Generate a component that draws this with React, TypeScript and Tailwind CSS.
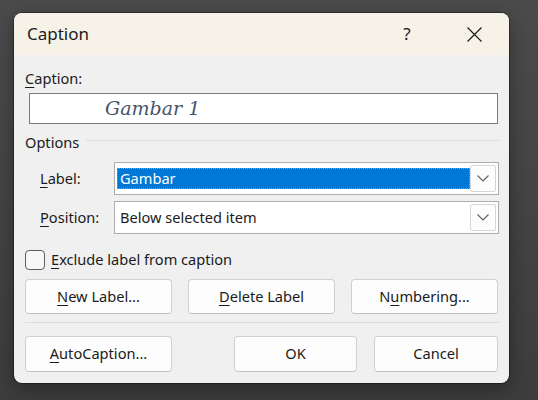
import React from 'react'

const font = { fontFamily: '"Noto Sans", "Open Sans", sans-serif' }

function Btn({ children, w }: { children: React.ReactNode; w: string }) {
  return (
    <button
      className={`${w} h-full bg-[#fdfdfd] border border-[#d0d0d0] border-b-[#c2c2c2] rounded-[4px] text-[14.6px] text-[#1b1b1b] flex items-center justify-center`}
    >
      {children}
    </button>
  )
}

function U({ children }: { children: React.ReactNode }) {
  return <span className="underline underline-offset-[3px] decoration-1">{children}</span>
}

function Chevron() {
  return (
    <svg width="12" height="7" viewBox="0 0 12 7" fill="none">
      <path d="M0.5 0.5 L6 6 L11.5 0.5" stroke="#616161" strokeWidth="1.1" />
    </svg>
  )
}

function Select({ value, selected }: { value: string; selected?: boolean }) {
  return (
    <div className="w-[385px] shrink-0 h-[33px] bg-white border border-[#adadad] flex items-center p-[2px]">
      <div className="flex-1 h-full flex items-center">
        {selected ? (
          <div className="w-full h-[21px] bg-[#0078d7] border border-dotted border-[#ff8c00] flex items-center pl-[2px] text-white">
            {value}
          </div>
        ) : (
          <div className="pl-[3px] text-[#1b1b1b]">{value}</div>
        )}
      </div>
      <div className="w-[26px] h-full bg-[#fdfdfd] border border-[#d6d6d6] rounded-[2px] flex items-center justify-center">
        <Chevron />
      </div>
    </div>
  )
}

export default function App() {
  return (
    <div className="w-[538px] h-[400px] bg-gradient-to-b from-[#4b4b4b] to-[#3d3d3d] pt-[13px] pl-[14px]" style={font}>
      <div className="w-[495px] h-[370px] bg-[#f0f0f0] rounded-lg overflow-hidden shadow-[0_0_0_1px_rgba(0,0,0,0.35),0_6px_20px_rgba(0,0,0,0.35)]">
        {/* title bar */}
        <div className="h-[42px] bg-[#f7f2e8] flex items-center pl-[13px] text-[#1b1b1b]">
          <div className="text-[17px] flex-1">Caption</div>
          <div className="w-[30px] text-[17px] text-center mr-[45px]">?</div>
          <svg width="15" height="15" viewBox="0 0 15 15" className="mr-[27px]">
            <path d="M0.5 0.5 L14.5 14.5 M14.5 0.5 L0.5 14.5" stroke="#1b1b1b" strokeWidth="1.2" />
          </svg>
        </div>

        {/* body */}
        <div className="pl-[11px] pr-[10px] text-[14.6px] text-[#1b1b1b]">
          <div className="mt-[13px] h-[20px] leading-[20px]">
            <U>C</U>aption:
          </div>
          <div className="mt-[5px] ml-[4px] w-[469px] h-[31px] bg-white border border-[#7a7a7a] flex items-center pl-[75px]">
            <span className="italic text-[19px] text-[#44546a]" style={{ fontFamily: '"DejaVu Serif", serif' }}>
              Gambar 1
            </span>
          </div>

          <div className="mt-[8px] h-[20px] flex items-center">
            <span className="leading-[20px]">Options</span>
            <div className="flex-1 h-px bg-[#dcdcdc] ml-[7px] -mt-[3px]" />
          </div>

          <div className="mt-[10px] flex items-center">
            <div className="w-[89px] pl-[15px]">
              <U>L</U>abel:
            </div>
            <Select value="Gambar" selected />
          </div>
          <div className="mt-[6px] flex items-center">
            <div className="w-[89px] pl-[15px]">
              <U>P</U>osition:
            </div>
            <Select value="Below selected item" />
          </div>

          <div className="mt-[16px] h-[20px] flex items-center">
            <div className="w-[20px] h-[20px] rounded-[4px] border border-[#5f5f5f] bg-[#f7f7f7]" />
            <span className="ml-[6px]">
              <U>E</U>xclude label from caption
            </span>
          </div>

          <div className="mt-[9px] h-[35px] flex gap-[16px]">
            <Btn w="w-[147px]">
              <U>N</U>ew Label...
            </Btn>
            <Btn w="w-[147px]">
              <U>D</U>elete Label
            </Btn>
            <Btn w="w-[147px]">
              N<U>u</U>mbering...
            </Btn>
          </div>

          <div className="mt-[8px] h-px bg-[#dcdcdc]" />

          <div className="mt-[13px] h-[36px] flex">
            <Btn w="w-[147px]">
              <U>A</U>utoCaption...
            </Btn>
            <div className="w-[62px]" />
            <Btn w="w-[123px]">OK</Btn>
            <div className="w-[17px]" />
            <Btn w="w-[124px]">Cancel</Btn>
          </div>
        </div>
      </div>
    </div>
  )
}
